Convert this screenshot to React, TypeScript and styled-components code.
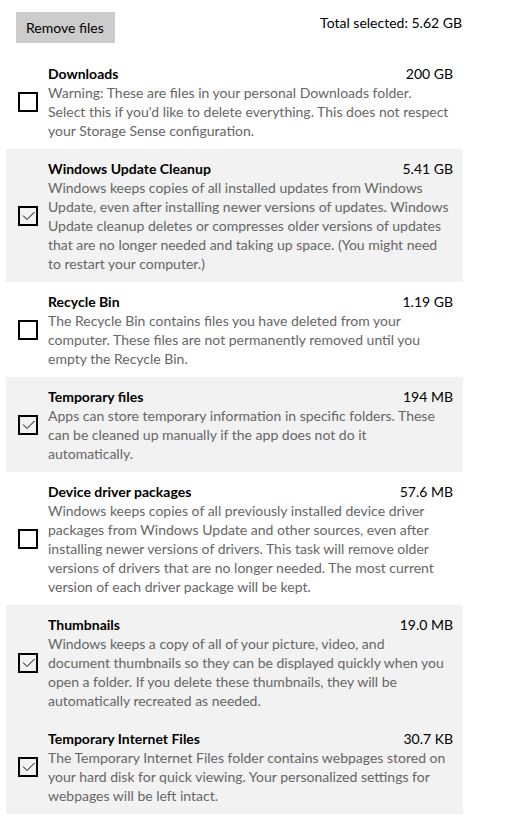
import * as React from "react"
import styled, { createGlobalStyle } from "styled-components"

const GlobalStyle = createGlobalStyle`
  body {
    margin: 0;
    background: #ffffff;
    font-family: "Segoe UI", Lato, "Noto Sans", sans-serif;
    font-size: 14px;
    color: #000000;
  }
`

interface ICleanupItem {
  title: string
  size: string
  description: string
  checked: boolean
}

const items: ICleanupItem[] = [
  {
    title: "Downloads",
    size: "200 GB",
    description:
      "Warning: These are files in your personal Downloads folder.\nSelect this if you'd like to delete everything. This does not respect\nyour Storage Sense configuration.",
    checked: false,
  },
  {
    title: "Windows Update Cleanup",
    size: "5.41 GB",
    description:
      "Windows keeps copies of all installed updates from Windows\nUpdate, even after installing newer versions of updates. Windows\nUpdate cleanup deletes or compresses older versions of updates\nthat are no longer needed and taking up space. (You might need\nto restart your computer.)",
    checked: true,
  },
  {
    title: "Recycle Bin",
    size: "1.19 GB",
    description:
      "The Recycle Bin contains files you have deleted from your\ncomputer. These files are not permanently removed until you\nempty the Recycle Bin.",
    checked: false,
  },
  {
    title: "Temporary files",
    size: "194 MB",
    description:
      "Apps can store temporary information in specific folders. These\ncan be cleaned up manually if the app does not do it\nautomatically.",
    checked: true,
  },
  {
    title: "Device driver packages",
    size: "57.6 MB",
    description:
      "Windows keeps copies of all previously installed device driver\npackages from Windows Update and other sources, even after\ninstalling newer versions of drivers. This task will remove older\nversions of drivers that are no longer needed. The most current\nversion of each driver package will be kept.",
    checked: false,
  },
  {
    title: "Thumbnails",
    size: "19.0 MB",
    description:
      "Windows keeps a copy of all of your picture, video, and\ndocument thumbnails so they can be displayed quickly when you\nopen a folder. If you delete these thumbnails, they will be\nautomatically recreated as needed.",
    checked: true,
  },
  {
    title: "Temporary Internet Files",
    size: "30.7 KB",
    description:
      "The Temporary Internet Files folder contains webpages stored on\nyour hard disk for quick viewing. Your personalized settings for\nwebpages will be left intact.",
    checked: true,
  },
]

const Page = styled.div`
  width: 457px;
  margin-left: 6px;
`

const Header = styled.div`
  display: flex;
  justify-content: space-between;
  align-items: flex-start;
  padding: 12px 1px 0 10px;
  margin-bottom: 11px;
`

const RemoveButton = styled.button`
  font: inherit;
  line-height: 19px;
  color: #000000;
  background: #cccccc;
  border: none;
  padding: 6px 11px 6px 10px;
  cursor: pointer;
`

const Total = styled.div`
  line-height: 19px;
  padding-top: 1px;
`

const List = styled.div`
  display: flex;
  flex-direction: column;
`

const Row = styled.label<{ $selected: boolean }>`
  display: grid;
  grid-template-columns: 20px 1fr;
  column-gap: 10px;
  align-items: center;
  padding: 10px 10px 9px 12px;
  background: ${(p) => (p.$selected ? "#f2f2f2" : "transparent")};
  cursor: pointer;
`

const Box = styled.span`
  box-sizing: border-box;
  display: block;
  width: 20px;
  height: 20px;
  border: 2px solid #000000;
  position: relative;

  svg {
    position: absolute;
    left: -2px;
    top: -2px;
  }
`

const Content = styled.div`
  line-height: 19px;
  min-width: 0;
`

const TitleLine = styled.div`
  display: flex;
  justify-content: space-between;
`

const Title = styled.span`
  font-weight: 700;
`

const Description = styled.div`
  color: #666666;
  white-space: pre;
`

function CheckBox(props: { checked: boolean }) {
  return (
    <Box>
      {props.checked && (
        <svg width="20" height="20" viewBox="0 0 20 20">
          <path
            d="M5 9.5 L9 13.5 L16.5 6"
            fill="none"
            stroke="#000000"
            strokeWidth="1"
          />
        </svg>
      )}
    </Box>
  )
}

export default function App() {
  const [checked, setChecked] = React.useState(items.map((i) => i.checked))

  const toggle = (index: number) => {
    setChecked((prev) => prev.map((c, i) => (i === index ? !c : c)))
  }

  return (
    <Page>
      <GlobalStyle />
      <Header>
        <RemoveButton>Remove files</RemoveButton>
        <Total>Total selected: 5.62 GB</Total>
      </Header>
      <List>
        {items.map((item, index) => (
          <Row
            key={item.title}
            $selected={checked[index]}
            onClick={() => toggle(index)}
          >
            <CheckBox checked={checked[index]} />
            <Content>
              <TitleLine>
                <Title>{item.title}</Title>
                <span>{item.size}</span>
              </TitleLine>
              <Description>{item.description}</Description>
            </Content>
          </Row>
        ))}
      </List>
    </Page>
  )
}
